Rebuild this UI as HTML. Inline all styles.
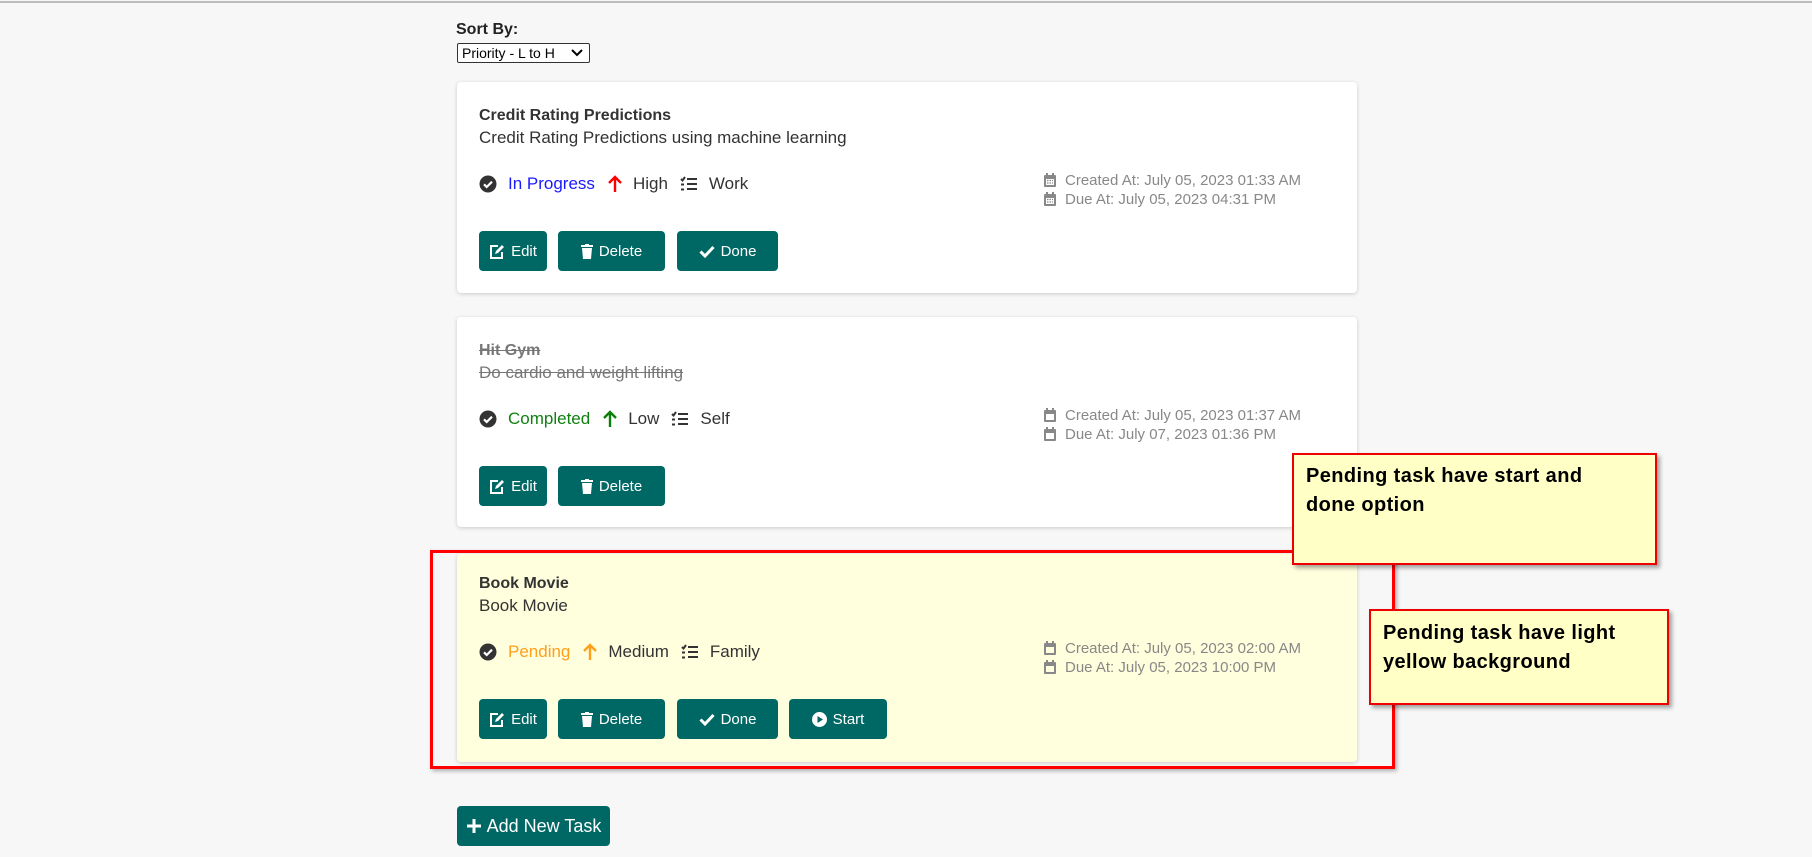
<!DOCTYPE html>
<html><head><meta charset="utf-8"><style>
*{box-sizing:border-box;margin:0;padding:0}
body{width:1812px;height:857px;background:#f7f7f7;font-family:"Liberation Sans",Arial,sans-serif;position:relative;overflow:hidden;color:#333}
.topline{position:absolute;left:0;top:1px;width:1812px;height:2px;background:#bdbdbd}
.abs{position:absolute}
.card{position:absolute;left:457px;width:900px;background:#fff;border-radius:4px;box-shadow:0 1px 4px rgba(0,0,0,.18)}
.title{position:absolute;left:22px;font-weight:bold;font-size:16px;color:#333}
.desc{position:absolute;left:22px;font-size:17px;color:#333}
.status{position:absolute;left:22px;font-size:17px;display:flex;align-items:center;white-space:nowrap}
.dates{position:absolute;left:586px;font-size:15px;color:#888;line-height:19px}
.dates div{display:flex;align-items:center}
.dates svg{margin-right:8px}
.btn{position:absolute;height:40px;background:#006864;color:#fff;border-radius:4px;font-size:15px;display:flex;align-items:center;justify-content:center;gap:6px}
.callout{position:absolute;background:#ffffc6;border:2px solid #e00;box-shadow:3px 3px 4px rgba(0,0,0,.35);font-weight:bold;font-size:20px;color:#000;line-height:29px;letter-spacing:.4px}
</style></head><body>
<div class="topline"></div>
<div class="abs" style="left:456px;top:21px;font-weight:bold;font-size:16px;color:#222">Sort By:</div>
<div class="abs" style="left:457px;top:43px;width:133px;height:20px;border:1px solid #333;border-radius:2px;background:#fff;font-size:14px;color:#000;padding-left:4px;line-height:18px">Priority - L to H<svg style="position:absolute;right:6px;top:5px" width="12" height="8" viewBox="0 0 12 8"><path d="M1 1l5 5 5-5" stroke="#000" stroke-width="2" fill="none"/></svg></div>

<!-- card 1 -->
<div class="card" style="top:82px;height:211px">
 <div class="title" style="top:25px">Credit Rating Predictions</div>
 <div class="desc" style="top:46px">Credit Rating Predictions using machine learning</div>
 <div class="status" style="top:92px">
  <svg width="18" height="18" viewBox="0 0 18 18"><circle cx="9" cy="9" r="8.5" fill="#333"/><path d="M5 9.3l2.7 2.7 5.3-5.3" stroke="#fff" stroke-width="2.2" fill="none"/></svg>
  <span style="color:#1a1aff;margin-left:11px">In Progress</span>
  <svg style="margin-left:12px" width="16" height="18" viewBox="0 0 16 18"><path d="M8 17V2M2 8l6-6 6 6" stroke="#f00" stroke-width="2.4" fill="none"/></svg>
  <span style="margin-left:10px">High</span>
  <svg style="margin-left:12px" width="18" height="16" viewBox="0 0 18 16"><path d="M1 3l1.5 1.5L5 1M1 8.5h3M1 13.5h3M7 3h10M7 8h10M7 13h10" stroke="#333" stroke-width="2" fill="none"/></svg>
  <span style="margin-left:11px">Work</span>
 </div>
 <div class="dates" style="top:89px">
  <div><svg width="14" height="15" viewBox="0 0 14 15"><rect x="1" y="2" width="12" height="12" rx="1" fill="#888"/><rect x="3" y="6" width="8" height="6" fill="#fff"/><path d="M4 0v3M10 0v3" stroke="#888" stroke-width="2"/><path d="M4 7.5h1.5M6.5 7.5h1.5M9 7.5h1M4 10h1.5M6.5 10h1.5M9 10h1" stroke="#888" stroke-width="1.3"/></svg>Created At: July 05, 2023 01:33 AM</div>
  <div><svg width="14" height="15" viewBox="0 0 14 15"><rect x="1" y="2" width="12" height="12" rx="1" fill="#888"/><rect x="3" y="6" width="8" height="6" fill="#fff"/><path d="M4 0v3M10 0v3" stroke="#888" stroke-width="2"/><path d="M4 7.5h1.5M6.5 7.5h1.5M9 7.5h1M4 10h1.5M6.5 10h1.5M9 10h1" stroke="#888" stroke-width="1.3"/></svg>Due At: July 05, 2023 04:31 PM</div>
 </div>
 <div class="btn" style="left:22px;top:149px;width:68px"><svg width="16" height="15" viewBox="0 0 16 15"><path d="M9 2H2v12h11V8" stroke="#fff" stroke-width="2" fill="none"/><path d="M6 10l1-3 6-6 2 2-6 6z" fill="#fff"/></svg>Edit</div>
 <div class="btn" style="left:101px;top:149px;width:107px"><svg width="12" height="15" viewBox="0 0 12 15"><rect x="0" y="1" width="12" height="2" fill="#fff"/><rect x="4" y="0" width="4" height="2" fill="#fff"/><path d="M1 4h10l-1 11H2z" fill="#fff"/></svg>Delete</div>
 <div class="btn" style="left:220px;top:149px;width:101px"><svg width="16" height="13" viewBox="0 0 16 13"><path d="M1.5 6.5l4.5 4.5 8.5-9" stroke="#fff" stroke-width="3" fill="none"/></svg>Done</div>
</div>

<!-- card 2 -->
<div class="card" style="top:317px;height:210px">
 <div class="title" style="top:25px;color:#777;text-decoration:line-through">Hit Gym</div>
 <div class="desc" style="top:46px;color:#777;text-decoration:line-through">Do cardio and weight lifting</div>
 <div class="status" style="top:92px">
  <svg width="18" height="18" viewBox="0 0 18 18"><circle cx="9" cy="9" r="8.5" fill="#333"/><path d="M5 9.3l2.7 2.7 5.3-5.3" stroke="#fff" stroke-width="2.2" fill="none"/></svg>
  <span style="color:#118011;margin-left:11px">Completed</span>
  <svg style="margin-left:12px" width="16" height="18" viewBox="0 0 16 18"><path d="M8 17V2M2 8l6-6 6 6" stroke="#0a800a" stroke-width="2.4" fill="none"/></svg>
  <span style="margin-left:10px">Low</span>
  <svg style="margin-left:12px" width="18" height="16" viewBox="0 0 18 16"><path d="M1 3l1.5 1.5L5 1M1 8.5h3M1 13.5h3M7 3h10M7 8h10M7 13h10" stroke="#333" stroke-width="2" fill="none"/></svg>
  <span style="margin-left:11px">Self</span>
 </div>
 <div class="dates" style="top:89px">
  <div><svg width="14" height="15" viewBox="0 0 14 15"><rect x="1" y="2" width="12" height="12" rx="1" fill="#888"/><rect x="3" y="6" width="8" height="6" fill="#fff"/><path d="M4 0v3M10 0v3" stroke="#888" stroke-width="2"/></svg>Created At: July 05, 2023 01:37 AM</div>
  <div><svg width="14" height="15" viewBox="0 0 14 15"><rect x="1" y="2" width="12" height="12" rx="1" fill="#888"/><rect x="3" y="6" width="8" height="6" fill="#fff"/><path d="M4 0v3M10 0v3" stroke="#888" stroke-width="2"/></svg>Due At: July 07, 2023 01:36 PM</div>
 </div>
 <div class="btn" style="left:22px;top:149px;width:68px"><svg width="16" height="15" viewBox="0 0 16 15"><path d="M9 2H2v12h11V8" stroke="#fff" stroke-width="2" fill="none"/><path d="M6 10l1-3 6-6 2 2-6 6z" fill="#fff"/></svg>Edit</div>
 <div class="btn" style="left:101px;top:149px;width:107px"><svg width="12" height="15" viewBox="0 0 12 15"><rect x="0" y="1" width="12" height="2" fill="#fff"/><rect x="4" y="0" width="4" height="2" fill="#fff"/><path d="M1 4h10l-1 11H2z" fill="#fff"/></svg>Delete</div>
</div>

<!-- card 3 -->
<div class="card" style="top:554px;height:208px;background:#fffedd">
 <div class="title" style="top:21px">Book Movie</div>
 <div class="desc" style="top:42px">Book Movie</div>
 <div class="status" style="top:88px">
  <svg width="18" height="18" viewBox="0 0 18 18"><circle cx="9" cy="9" r="8.5" fill="#333"/><path d="M5 9.3l2.7 2.7 5.3-5.3" stroke="#fff" stroke-width="2.2" fill="none"/></svg>
  <span style="color:#ff9f1a;margin-left:11px">Pending</span>
  <svg style="margin-left:12px" width="16" height="18" viewBox="0 0 16 18"><path d="M8 17V2M2 8l6-6 6 6" stroke="#ff9f1a" stroke-width="2.4" fill="none"/></svg>
  <span style="margin-left:10px">Medium</span>
  <svg style="margin-left:12px" width="18" height="16" viewBox="0 0 18 16"><path d="M1 3l1.5 1.5L5 1M1 8.5h3M1 13.5h3M7 3h10M7 8h10M7 13h10" stroke="#333" stroke-width="2" fill="none"/></svg>
  <span style="margin-left:11px">Family</span>
 </div>
 <div class="dates" style="top:85px">
  <div><svg width="14" height="15" viewBox="0 0 14 15"><rect x="1" y="2" width="12" height="12" rx="1" fill="#888"/><rect x="3" y="6" width="8" height="6" fill="#fffedd"/><path d="M4 0v3M10 0v3" stroke="#888" stroke-width="2"/></svg>Created At: July 05, 2023 02:00 AM</div>
  <div><svg width="14" height="15" viewBox="0 0 14 15"><rect x="1" y="2" width="12" height="12" rx="1" fill="#888"/><rect x="3" y="6" width="8" height="6" fill="#fffedd"/><path d="M4 0v3M10 0v3" stroke="#888" stroke-width="2"/></svg>Due At: July 05, 2023 10:00 PM</div>
 </div>
 <div class="btn" style="left:22px;top:145px;width:68px"><svg width="16" height="15" viewBox="0 0 16 15"><path d="M9 2H2v12h11V8" stroke="#fff" stroke-width="2" fill="none"/><path d="M6 10l1-3 6-6 2 2-6 6z" fill="#fff"/></svg>Edit</div>
 <div class="btn" style="left:101px;top:145px;width:107px"><svg width="12" height="15" viewBox="0 0 12 15"><rect x="0" y="1" width="12" height="2" fill="#fff"/><rect x="4" y="0" width="4" height="2" fill="#fff"/><path d="M1 4h10l-1 11H2z" fill="#fff"/></svg>Delete</div>
 <div class="btn" style="left:220px;top:145px;width:101px"><svg width="16" height="13" viewBox="0 0 16 13"><path d="M1.5 6.5l4.5 4.5 8.5-9" stroke="#fff" stroke-width="3" fill="none"/></svg>Done</div>
 <div class="btn" style="left:332px;top:145px;width:98px"><svg width="15" height="15" viewBox="0 0 15 15"><circle cx="7.5" cy="7.5" r="7.5" fill="#fff"/><path d="M5.5 4v7l5.5-3.5z" fill="#006864"/></svg>Start</div>
</div>

<!-- red highlight box -->
<div class="abs" style="left:430px;top:550px;width:965px;height:219px;border:3px solid #f00;box-shadow:2px 2px 4px rgba(0,0,0,.3)"></div>

<div class="btn" style="left:457px;top:806px;width:153px;height:40px;font-size:18px;gap:5px"><svg width="16" height="16" viewBox="0 0 16 16"><path d="M8 1v14M1 8h14" stroke="#fff" stroke-width="3"/></svg>Add New Task</div>

<div class="callout" style="left:1292px;top:453px;width:365px;height:112px;padding:7px 0 0 12px">Pending task have start and<br>done option</div>
<div class="callout" style="left:1369px;top:609px;width:300px;height:96px;padding:8px 0 0 12px">Pending task have light<br>yellow background</div>
</body></html>
